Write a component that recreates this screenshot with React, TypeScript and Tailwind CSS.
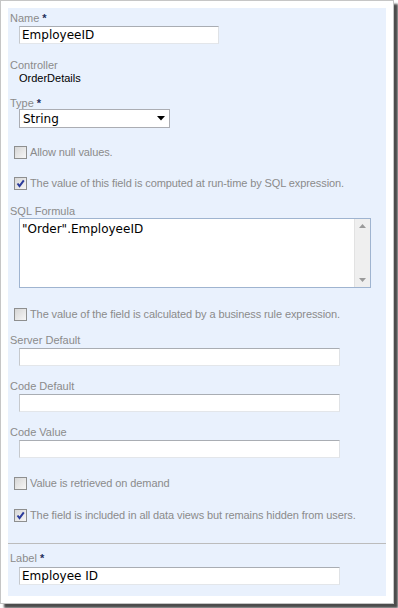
import React from "react";

const labelFont = { fontFamily: "'Liberation Sans', Arial, sans-serif" };
const inputFont = { fontFamily: "'DejaVu Sans', Verdana, sans-serif" };

function Label({ text, required, className = "" }: { text: string; required?: boolean; className?: string }) {
  return (
    <div className={`h-[13px] pl-[2px] text-[11px] leading-[13px] text-[#8b8b8b] ${className}`} style={labelFont}>
      {text}
      {required && <span className="ml-[3px] font-bold text-[#1d2f5c]">*</span>}
    </div>
  );
}

function TextBox({ value = "", width, className = "" }: { value?: string; width: number; className?: string }) {
  return (
    <div
      className={`ml-[11px] flex h-[18px] items-center border border-t-[#a9adb3] border-l-[#c6c9cd] border-r-[#dfe2e6] border-b-[#e3e6ea] bg-white pl-[2px] text-[12px] text-black ${className}`}
      style={{ ...inputFont, width }}
    >
      {value}
    </div>
  );
}

function CheckBox({ text, checked, className = "" }: { text: string; checked?: boolean; className?: string }) {
  return (
    <div className={`flex h-[13px] items-center pl-[6px] ${className}`}>
      <span className="relative inline-block h-[13px] w-[13px] shrink-0 border border-[#8e8f8f] bg-gradient-to-br from-[#d6d6d6] to-[#f7f7f7]">
        {checked && (
          <svg viewBox="0 0 11 11" className="absolute inset-0 h-[11px] w-[11px]">
            <path d="M2.5 5.5 L4.5 8 L8.8 2.3" fill="none" stroke="#2a3b9c" strokeWidth="2" />
          </svg>
        )}
      </span>
      <span className="ml-[3px] whitespace-nowrap text-[11px] leading-[13px] tracking-[-0.1px] text-[#8b8b8b]" style={labelFont}>
        {text}
      </span>
    </div>
  );
}

export default function App() {
  return (
    <div className="h-[608px] w-[398px] bg-white">
      <div className="h-[604px] w-[394px] border border-[#c6c6c6] bg-white p-[7px] shadow-[4px_4px_2px_rgba(0,0,0,0.7)]">
        <div className="flex h-[588px] flex-col bg-[#e9f1fd] pt-[4px]">
          <Label text="Name" required />
          <TextBox value="EmployeeID" width={200} className="mt-[1px]" />

          <Label text="Controller" className="mt-[15px]" />
          <div className="ml-[11px] h-[13px] text-[11px] leading-[13px] text-black" style={labelFont}>
            OrderDetails
          </div>

          <Label text="Type" required className="mt-[12px]" />
          <div
            className="ml-[11px] mt-[-1px] flex h-[19px] w-[151px] items-center justify-between border border-[#abadb3] bg-white pl-[3px] pr-[4px] text-[12px] text-black"
            style={inputFont}
          >
            <span>String</span>
            <svg width="8" height="5" viewBox="0 0 8 5">
              <path d="M0 0 H8 L4 4.5 Z" fill="#000" />
            </svg>
          </div>

          <CheckBox text="Allow null values." className="mt-[18px]" />
          <CheckBox text="The value of this field is computed at run-time by SQL expression." checked className="mt-[18px]" />

          <Label text="SQL Formula" className="mt-[15px]" />
          <div className="ml-[11px] flex h-[70px] w-[352px] border border-[#9fb4d0] bg-white">
            <div className="flex-1 pl-[2px] pt-[3px] text-[12px] leading-[14px] text-black" style={inputFont}>
              "Order".EmployeeID
            </div>
            <div className="flex w-[16px] flex-col items-center justify-between border-l border-[#e2e2e2] bg-[#efefef] py-[5px]">
              <svg width="7" height="4" viewBox="0 0 7 4">
                <path d="M0 4 H7 L3.5 0 Z" fill="#9a9a9a" />
              </svg>
              <svg width="7" height="4" viewBox="0 0 7 4">
                <path d="M0 0 H7 L3.5 4 Z" fill="#9a9a9a" />
              </svg>
            </div>
          </div>

          <CheckBox text="The value of the field is calculated by a business rule expression." className="mt-[20px]" />

          <Label text="Server Default" className="mt-[13px]" />
          <TextBox width={321} className="mt-[1px]" />
          <Label text="Code Default" className="mt-[14px]" />
          <TextBox width={321} className="mt-[1px]" />
          <Label text="Code Value" className="mt-[14px]" />
          <TextBox width={321} className="mt-[1px]" />

          <CheckBox text="Value is retrieved on demand" className="mt-[19px]" />
          <CheckBox text="The field is included in all data views but remains hidden from users." checked className="mt-[19px]" />

          <div className="mt-[21px] h-px bg-[#bcbcbc]" />

          <Label text="Label" required className="mt-[8px]" />
          <TextBox value="Employee ID" width={321} className="mt-[2px]" />
        </div>
      </div>
    </div>
  );
}
